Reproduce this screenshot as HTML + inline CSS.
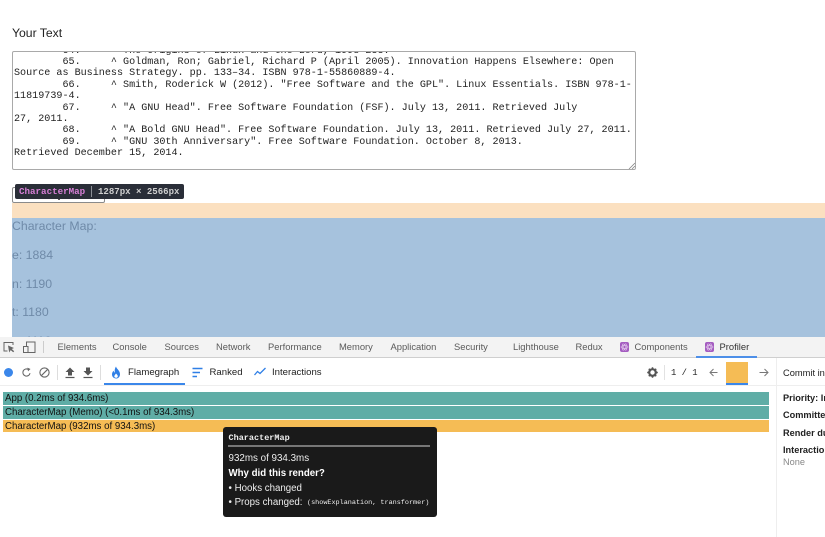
<!DOCTYPE html>
<html><head><meta charset="utf-8"><style>
html,body{margin:0;padding:0;background:#fff;width:825px;height:537px;overflow:hidden;font-family:"Liberation Sans",sans-serif}
.a{position:absolute;white-space:pre}
.tab{position:absolute;top:341px;font-size:9.400px;line-height:11px;color:#5a5a5a;white-space:pre}
.blue{font-size:12.300px;line-height:16px;color:#6f8aa8;left:12px}
.bar{position:absolute;left:3px;width:766px;font-size:9.700px;line-height:14px;color:#111;padding-left:2px;box-sizing:border-box;white-space:pre;overflow:hidden}
.side{position:absolute;left:783px;width:42px;overflow:hidden;font-size:9.200px;font-weight:bold;color:#222;line-height:11px;white-space:pre}
svg{position:absolute;overflow:visible}
</style></head><body>
<div class="a" style="left:12px;top:26px;font-size:12.200px;line-height:14px;color:#222">Your Text</div>

<div style="position:absolute;left:12px;top:51px;width:624px;height:119px;box-sizing:border-box;border:1px solid #a9a9a9;border-radius:2px;overflow:hidden;background:#fff">
<pre style="position:absolute;left:1px;top:-6.500px;margin:0;font-family:'Liberation Mono',monospace;font-size:10.100px;line-height:11.420px;color:#222;tab-size:8">	64.	^ The Origins of Linux and the Lord, 1998 233.
	65.	^ Goldman, Ron; Gabriel, Richard P (April 2005). Innovation Happens Elsewhere: Open
Source as Business Strategy. pp. 133–34. ISBN 978-1-55860889-4.
	66.	^ Smith, Roderick W (2012). "Free Software and the GPL". Linux Essentials. ISBN 978-1-
11819739-4.
	67.	^ "A GNU Head". Free Software Foundation (FSF). July 13, 2011. Retrieved July
27, 2011.
	68.	^ "A Bold GNU Head". Free Software Foundation. July 13, 2011. Retrieved July 27, 2011.
	69.	^ "GNU 30th Anniversary". Free Software Foundation. October 8, 2013.
Retrieved December 15, 2014.</pre>
<svg style="right:0;bottom:0;left:auto;top:auto" width="7" height="7" viewBox="0 0 7 7"><path d="M1 7L7 1M4 7L7 4" stroke="#888" stroke-width=".8" fill="none"/></svg>
</div>

<div style="position:absolute;left:12px;top:187px;width:93px;height:16px;box-sizing:border-box;border:1px solid #8a8a8a;border-radius:2px;background:#fff"></div>
<div style="position:absolute;left:58px;top:199px;width:2px;height:1px;background:#555"></div>
<div style="position:absolute;left:12px;top:203px;width:813px;height:15px;background:#fbe0c0"></div>
<div style="position:absolute;left:12px;top:218px;width:813px;height:119px;background:#a6c2dd"></div>
<div class="a blue" style="top:218px">Character Map:</div>
<div class="a blue" style="top:246.500px">e: 1884</div>
<div class="a blue" style="top:275.500px">n: 1190</div>
<div class="a blue" style="top:303.500px">t: 1180</div>
<div class="a blue" style="top:333px">a: 1116</div>

<div style="position:absolute;left:15px;top:184px;width:169px;height:15px;background:#2a2e38;border-radius:2px"></div>
<div class="a" style="left:19px;top:185px;font-family:'Liberation Mono',monospace;font-size:9.200px;line-height:13px;font-weight:bold;color:#d77fd6">CharacterMap</div>
<div style="position:absolute;left:91px;top:186px;width:1px;height:11px;background:#8c8f96"></div>
<div class="a" style="left:98px;top:185px;font-family:'Liberation Mono',monospace;font-size:9.050px;line-height:13px;font-weight:bold;color:#cfcfcf">1287px × 2566px</div>

<!-- devtools -->
<div style="position:absolute;left:0;top:337px;width:825px;height:200px;background:#fff"></div>
<div style="position:absolute;left:0;top:337px;width:825px;height:20px;background:#f3f3f3;border-bottom:1px solid #cfcfcf"></div>
<svg style="left:3px;top:341px" width="12" height="12" viewBox="0 0 12 12"><path d="M4.500 10H1V1.500H10V4" fill="none" stroke="#666" stroke-width="1"/><path d="M5 4.500l1.200 7 1.500-2.400 2.500 2.200 1-1.100-2.400-2.200L11 7z" fill="#666"/></svg>
<svg style="left:23px;top:341px" width="13" height="12" viewBox="0 0 13 12"><path d="M3.500 1h8.500v10.500H3.500z" fill="none" stroke="#666"/><path d="M.5 5.500h4.500v6H.5z" fill="#f3f3f3" stroke="#666"/></svg>
<div style="position:absolute;left:43px;top:341px;width:1px;height:12px;background:#ccc"></div>
<div class="tab" style="left:57.500px">Elements</div>
<div class="tab" style="left:112.500px">Console</div>
<div class="tab" style="left:164.500px">Sources</div>
<div class="tab" style="left:216px">Network</div>
<div class="tab" style="left:268px">Performance</div>
<div class="tab" style="left:339px">Memory</div>
<div class="tab" style="left:390.500px">Application</div>
<div class="tab" style="left:454px">Security</div>
<div class="tab" style="left:513px">Lighthouse</div>
<div class="tab" style="left:575.500px">Redux</div>
<svg style="left:620px;top:342px" width="9" height="10" viewBox="0 0 9 10"><rect width="9" height="10" rx="2" fill="#a45cc0"/><g fill="none" stroke="#e2c8ec" stroke-width=".6"><ellipse cx="4.500" cy="5" rx="3.500" ry="1.400"/><ellipse cx="4.500" cy="5" rx="3.500" ry="1.400" transform="rotate(60 4.500 5)"/><ellipse cx="4.500" cy="5" rx="3.500" ry="1.400" transform="rotate(120 4.500 5)"/></g></svg>
<div class="tab" style="left:634.500px">Components</div>
<svg style="left:705px;top:342px" width="9" height="10" viewBox="0 0 9 10"><rect width="9" height="10" rx="2" fill="#a45cc0"/><g fill="none" stroke="#e2c8ec" stroke-width=".6"><ellipse cx="4.500" cy="5" rx="3.500" ry="1.400"/><ellipse cx="4.500" cy="5" rx="3.500" ry="1.400" transform="rotate(60 4.500 5)"/><ellipse cx="4.500" cy="5" rx="3.500" ry="1.400" transform="rotate(120 4.500 5)"/></g></svg>
<div class="tab" style="left:719.500px;color:#333">Profiler</div>
<div style="position:absolute;left:696px;top:356px;width:61px;height:2px;background:#4d8fe8"></div>

<div style="position:absolute;left:4px;top:368px;width:9px;height:9px;border-radius:50%;background:#3b87ea"></div>
<svg style="left:21px;top:367px" width="11" height="11" viewBox="0 0 11 11"><path d="M9 6.200A3.600 3.600 0 1 1 7.600 2.600" fill="none" stroke="#666" stroke-width="1.100"/><path d="M6.400 .6L9.500 2 7 4.400z" fill="#666"/></svg>
<svg style="left:39px;top:367px" width="11" height="11" viewBox="0 0 11 11"><circle cx="5.500" cy="5.500" r="4.600" fill="none" stroke="#666" stroke-width="1.100"/><path d="M2.300 8.700L8.700 2.300" stroke="#666" stroke-width="1.100"/></svg>
<div style="position:absolute;left:57px;top:365px;width:1px;height:15px;background:#ddd"></div>
<svg style="left:64px;top:367px" width="12" height="12" viewBox="0 0 12 12"><path d="M6 .5L10.500 5H8v3.500H4V5H1.500z" fill="#555"/><path d="M1.500 10.500h9" stroke="#555" stroke-width="1.200"/></svg>
<svg style="left:82px;top:367px" width="12" height="12" viewBox="0 0 12 12"><path d="M6 8.500L1.500 4H4V.5h4V4h2.500z" fill="#555"/><path d="M1.500 10.500h9" stroke="#555" stroke-width="1.200"/></svg>
<div style="position:absolute;left:100px;top:365px;width:1px;height:15px;background:#ddd"></div>

<svg style="left:111px;top:366px" width="10" height="13" viewBox="0 0 10 13"><path d="M5 .5C5.500 3 9 4.500 9 8.200C9 10.800 7.200 12.500 5 12.500C2.800 12.500 1 10.800 1 8.400C1 6.800 1.800 5.600 2.600 4.800C2.800 5.800 3.200 6.400 3.800 6.600C3.400 4.400 3.900 2 5 .5Z" fill="#2f7fe6"/><path d="M5 7.500C6 8.500 6.800 9.300 6.800 10.200C6.800 11.200 6 11.800 5 11.800C4 11.800 3.300 11.200 3.300 10.300C3.300 9.300 4.300 8.700 5 7.500Z" fill="#fff"/></svg>
<div class="a" style="left:128px;top:367px;font-size:9.600px;line-height:12px;color:#222">Flamegraph</div>
<div style="position:absolute;left:104px;top:383px;width:81px;height:2px;background:#3b87ea"></div>
<svg style="left:192px;top:367px" width="12" height="11" viewBox="0 0 12 11"><path d="M.5 1.500h10M.5 5.500h7.500M.5 9.500h4.500" stroke="#2f7fe6" stroke-width="1.500" fill="none"/></svg>
<div class="a" style="left:209.500px;top:367px;font-size:9.600px;line-height:12px;color:#222">Ranked</div>
<svg style="left:254px;top:367px" width="12" height="10" viewBox="0 0 12 10"><path d="M.5 8L3.500 4.500L6 6.500L11.500 1" stroke="#2f7fe6" stroke-width="1.300" fill="none"/></svg>
<div class="a" style="left:272px;top:367px;font-size:9.600px;line-height:12px;color:#222">Interactions</div>

<svg style="left:647px;top:367px" width="11" height="11" viewBox="0 0 11 11"><circle cx="5.500" cy="5.500" r="3.300" fill="none" stroke="#555" stroke-width="2.200"/><path d="M5.500 .2v2M5.500 8.800v2M.2 5.500h2M8.800 5.500h2M1.800 1.800l1.400 1.400M7.800 7.800l1.400 1.400M1.800 9.200l1.400-1.400M7.800 3.200l1.400-1.400" stroke="#555" stroke-width="1.500"/></svg>
<div style="position:absolute;left:664px;top:365px;width:1px;height:15px;background:#e2e2e2"></div>
<div class="a" style="left:671px;top:367px;font-family:'Liberation Mono',monospace;font-size:8.900px;line-height:12px;color:#222">1 / 1</div>
<svg style="left:709px;top:368px" width="9" height="9" viewBox="0 0 9 9"><path d="M8.500 4.500H1M4.500 1L1 4.500L4.500 8" stroke="#777" stroke-width="1" fill="none"/></svg>
<div style="position:absolute;left:726px;top:362px;width:22px;height:21px;background:#f5bc55"></div>
<div style="position:absolute;left:726px;top:383px;width:22px;height:2px;background:#3b87ea"></div>
<svg style="left:758.500px;top:368px" width="10" height="9" viewBox="0 0 10 9"><path d="M.5 4.500H9M5.500 1L9 4.500L5.500 8" stroke="#777" stroke-width="1" fill="none"/></svg>

<div style="position:absolute;left:0;top:385px;width:776px;height:1px;background:#eee"></div>
<div style="position:absolute;left:776px;top:358px;width:1px;height:179px;background:#eee"></div>
<div style="position:absolute;left:776px;top:385px;width:49px;height:1px;background:#eee"></div>
<div class="a" style="left:783px;top:367px;width:42px;overflow:hidden;font-size:9.300px;line-height:12px;color:#222">Commit information</div>

<div class="bar" style="top:392px;height:13px;background:#5fada6">App (0.2ms of 934.6ms)</div>
<div class="bar" style="top:406px;height:12.500px;background:#5fada6">CharacterMap (Memo) (&lt;0.1ms of 934.3ms)</div>
<div class="bar" style="top:420px;height:12px;line-height:13px;background:#f5bc55">CharacterMap (932ms of 934.3ms)</div>

<div class="side" style="top:393px">Priority: Immediate</div>
<div class="side" style="top:409.500px">Committed at: 1.2s</div>
<div class="side" style="top:427.500px">Render duration: 934ms</div>
<div class="side" style="top:444.500px">Interactions</div>
<div class="side" style="top:456.500px;font-weight:normal;color:#888">None</div>

<div style="position:absolute;left:222.500px;top:427px;width:214px;height:89.500px;background:#1a1a1a;border-radius:3px"></div>
<div class="a" style="left:228.500px;top:432px;font-family:'Liberation Mono',monospace;font-size:8.500px;font-weight:bold;line-height:12px;color:#f0f0f0">CharacterMap</div>
<div style="position:absolute;left:228px;top:445px;width:202px;height:1.500px;background:#777"></div>
<div class="a" style="left:228.500px;top:453px;font-size:9.800px;line-height:12px;color:#eee">932ms of 934.3ms</div>
<div class="a" style="left:228.500px;top:468px;font-size:9.700px;font-weight:bold;line-height:12px;color:#fff">Why did this render?</div>
<div class="a" style="left:228.500px;top:482.500px;font-size:9.700px;line-height:12px;color:#eee">• Hooks changed</div>
<div class="a" style="left:228.500px;top:496.500px;font-size:9.700px;line-height:12px;color:#eee">• Props changed:</div>
<div class="a" style="left:307px;top:497px;font-family:'Liberation Mono',monospace;font-size:6.800px;line-height:12px;color:#eee">(showExplanation, transformer)</div>
</body></html>
